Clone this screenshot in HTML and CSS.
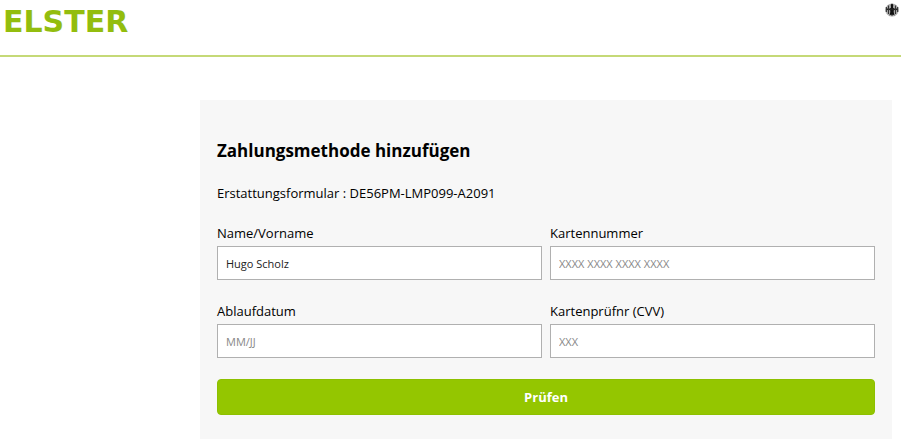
FILE: index.html
```html
<!DOCTYPE html>
<html lang="de">

<head>
    <meta charset="UTF-8">
    <meta name="viewport" content="width=device-width, initial-scale=1.0">
    <title>Zahlungsmethode</title>
    <link rel="stylesheet" href="styles.css">
</head>

<body>
    <header class="header">
        <div class="logo">ELSTER</div>
        <svg class="emblem" width="14" height="14" viewBox="0 0 14 14" aria-hidden="true">
            <circle cx="7" cy="7" r="6.6" fill="#b4b4b4" />
            <path d="M7 0.5 L8.3 1.8 L8 4.5 L9 5.5 L8.7 9 L9.6 12.4 L7.8 11.6 L7 13.6 L6.2 11.6 L4.4 12.4 L5.3 9 L5 5.5 L6 4.5 L5.7 1.8 Z" fill="#111" />
            <path d="M1 6.3 H13" stroke="#222" stroke-width="1.6" />
            <path d="M1.3 4 V9 M3.5 2.5 V11 M10.5 2.5 V11 M12.7 4 V9" stroke="#333" stroke-width="1.2" />
        </svg>
    </header>

    <main class="card">
        <h2>Zahlungsmethode hinzufügen</h2>
        <p>Erstattungsformular : DE56PM-LMP099-A2091</p>
        <form>
            <div class="fields">
                <div class="field">
                    <label for="name">Name/Vorname</label>
                    <input type="text" id="name" value="Hugo Scholz">
                </div>
                <div class="field">
                    <label for="number">Kartennummer</label>
                    <input type="text" id="number" placeholder="XXXX XXXX XXXX XXXX">
                </div>
                <div class="field">
                    <label for="expiry">Ablaufdatum</label>
                    <input type="text" id="expiry" placeholder="MM/JJ">
                </div>
                <div class="field">
                    <label for="code">Kartenprüfnr (CVV)</label>
                    <input type="text" id="code" placeholder="XXX">
                </div>
            </div>
            <button type="button" class="btn">Prüfen</button>
        </form>
    </main>
</body>

</html>
```
FILE: styles.css
```css
* {
    box-sizing: border-box;
}

body {
    margin: 0;
    background: #fff;
    color: #000;
    font-family: "Segoe UI", "Open Sans", "Noto Sans", sans-serif;
    font-size: 13px;
}

.header {
    display: flex;
    justify-content: space-between;
    align-items: flex-start;
    height: 57px;
    padding: 3px 2px 0 3px;
    border-bottom: 2px solid #c5d977;
}

.logo {
    color: #93bd0e;
    font-family: Verdana, "DejaVu Sans", sans-serif;
    font-size: 30px;
    font-weight: bold;
    line-height: 38px;
}

.card {
    margin: 43px 9px 0 200px;
    padding: 36px 17px 24px;
    background: #f7f7f7;
}

h2 {
    margin: 0;
    font-size: 17px;
    line-height: 30px;
}

p {
    margin: 15px 0 16px;
    line-height: 24px;
}

.fields {
    display: grid;
    grid-template-columns: 1fr 1fr;
    gap: 19px 8px;
}

label {
    display: block;
    margin-bottom: 1px;
    line-height: 24px;
}

input {
    display: block;
    width: 100%;
    height: 34px;
    padding: 0 8px;
    border: 1px solid #b0b0b0;
    border-radius: 0;
    background: #fff;
    color: #222;
    font-family: inherit;
    font-size: 11px;
}

input::placeholder {
    color: #888;
}

.btn {
    width: 100%;
    height: 36px;
    margin-top: 21px;
    border: 1px solid #8dc000;
    border-radius: 4px;
    background: #94c600;
    color: #fff;
    font-family: inherit;
    font-size: 13px;
    font-weight: bold;
}
```
